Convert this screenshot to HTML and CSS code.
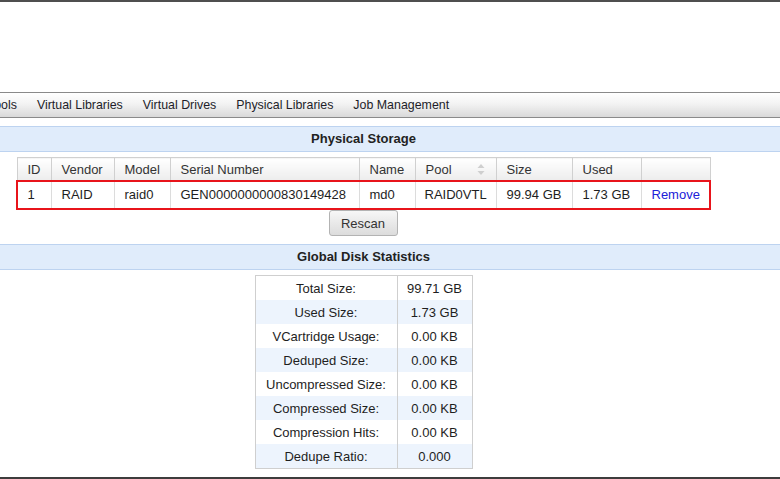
FILE: index.html
```html
<!DOCTYPE html>
<html>
<head>
<meta charset="utf-8">
<title>Physical Storage</title>
<link rel="stylesheet" href="styles.css">
</head>
<body>
<div class="topline"></div>
<div class="page">
  <div class="banner"></div>
  <nav class="menu">
    <span class="menu-item">Tools</span>
    <span class="menu-item">Virtual Libraries</span>
    <span class="menu-item">Virtual Drives</span>
    <span class="menu-item">Physical Libraries</span>
    <span class="menu-item">Job Management</span>
  </nav>

  <div class="section-title">Physical Storage</div>
  <table class="storage">
    <colgroup>
      <col class="c-id"><col class="c-vendor"><col class="c-model"><col class="c-serial"><col class="c-name"><col class="c-pool"><col class="c-size"><col class="c-used"><col class="c-act">
    </colgroup>
    <thead>
      <tr>
        <th>ID</th><th>Vendor</th><th>Model</th><th>Serial Number</th><th>Name</th>
        <th><div class="sortable"><span>Pool</span>
          <svg class="sort-icon" width="8" height="11" viewBox="0 0 8 11"><path d="M4 0 L7.5 4 L0.5 4 Z M0.5 7 L7.5 7 L4 11 Z" fill="#cfcfcf"/></svg>
        </div></th>
        <th>Size</th><th>Used</th><th></th>
      </tr>
    </thead>
    <tbody>
      <tr class="highlight">
        <td>1</td><td>RAID</td><td>raid0</td><td>GEN0000000000830149428</td><td>md0</td><td>RAID0VTL</td><td>99.94 GB</td><td>1.73 GB</td><td><a class="link" href="#">Remove</a></td>
      </tr>
    </tbody>
  </table>
  <div class="actions"><button class="btn">Rescan</button></div>

  <div class="section-title">Global Disk Statistics</div>
  <table class="stats">
    <tr><td class="label">Total Size:</td><td>99.71 GB</td></tr>
    <tr><td class="label">Used Size:</td><td>1.73 GB</td></tr>
    <tr><td class="label">VCartridge Usage:</td><td>0.00 KB</td></tr>
    <tr><td class="label">Deduped Size:</td><td>0.00 KB</td></tr>
    <tr><td class="label">Uncompressed Size:</td><td>0.00 KB</td></tr>
    <tr><td class="label">Compressed Size:</td><td>0.00 KB</td></tr>
    <tr><td class="label">Compression Hits:</td><td>0.00 KB</td></tr>
    <tr><td class="label">Dedupe Ratio:</td><td>0.000</td></tr>
  </table>
  <div class="footer-bar"></div>
</div>
</body>
</html>
```

FILE: styles.css
```css
html, body {
  margin: 0;
  padding: 0;
  overflow: hidden;
  background: #fff;
}
body {
  font-family: "Liberation Sans", Arial, sans-serif;
  font-size: 13px;
  color: #222;
  width: 780px;
  height: 479px;
}
.topline {
  height: 2px;
  background: #4f4f4f;
}
.page {
  margin-left: -53px;
  width: 833px;
}
.banner {
  height: 90px;
}
.menu {
  display: flex;
  align-items: center;
  gap: 20px;
  height: 24px;
  padding-left: 41px;
  border-top: 1px solid #8a8a8a;
  border-bottom: 1px solid #8a8a8a;
  background: linear-gradient(#ffffff, #f3f3f3 45%, #d9d9d9);
  font-size: 12.4px;
  color: #1e1e2a;
}
.section-title {
  margin-top: 8px;
  height: 24px;
  line-height: 24px;
  border-top: 1px solid #bdd3f0;
  border-bottom: 1px solid #bdd3f0;
  background: #e0ecfb;
  text-align: center;
  font-weight: bold;
  font-size: 13px;
  color: #222;
}
.storage {
  margin: 5px auto 0;
  width: 693px;
  border-collapse: collapse;
  table-layout: fixed;
}
.c-id { width: 34px; }
.c-vendor { width: 63px; }
.c-model { width: 56px; }
.c-serial { width: 189px; }
.c-name { width: 56px; }
.c-pool { width: 81px; }
.c-size { width: 76px; }
.c-used { width: 69px; }
.c-act { width: 69px; }
.storage th {
  height: 22px;
  padding: 0 0 0 10px;
  text-align: left;
  font-weight: normal;
  color: #333;
  border: 1px solid #d0d0d0;
  background: linear-gradient(#ffffff, #f6f6f6 50%, #ececec);
}
.sortable {
  display: flex;
  align-items: center;
  justify-content: space-between;
  padding-right: 11px;
}
.sort-icon {
  display: block;
}
.storage td {
  height: 27px;
  padding: 0 0 0 10px;
  border: 1px solid #dcdcdc;
  color: #1e1e1e;
  white-space: nowrap;
}
.storage td:nth-child(6) {
  padding-left: 9px;
}
.highlight {
  outline: 2px solid #e8141b;
  outline-offset: -1px;
}
.link {
  color: #2020d8;
  text-decoration: none;
}
.actions {
  display: flex;
  justify-content: center;
  margin-top: 1px;
  margin-left: -1px;
}
.btn {
  width: 69px;
  height: 26px;
  font-family: "Liberation Sans", Arial, sans-serif;
  font-size: 13px;
  color: #333;
  border: 1px solid #b3b3b3;
  border-radius: 3px;
  background: linear-gradient(#f7f7f7, #e9e9e9 50%, #dcdcdc);
  padding: 0;
}
.stats {
  margin: 5px auto 0;
  width: 218px;
  border-collapse: collapse;
  border: 1px solid #cfcfcf;
}
.stats td {
  height: 24px;
  padding: 0;
  text-align: center;
  color: #1e1e1e;
}
.stats td.label {
  width: 141px;
  border-right: 1px solid #cfcfcf;
}
.stats tr:nth-child(even) td {
  background: #edf4fd;
}
.footer-bar {
  margin-top: 8px;
  height: 10px;
  background: #3d3d3d;
}
```
